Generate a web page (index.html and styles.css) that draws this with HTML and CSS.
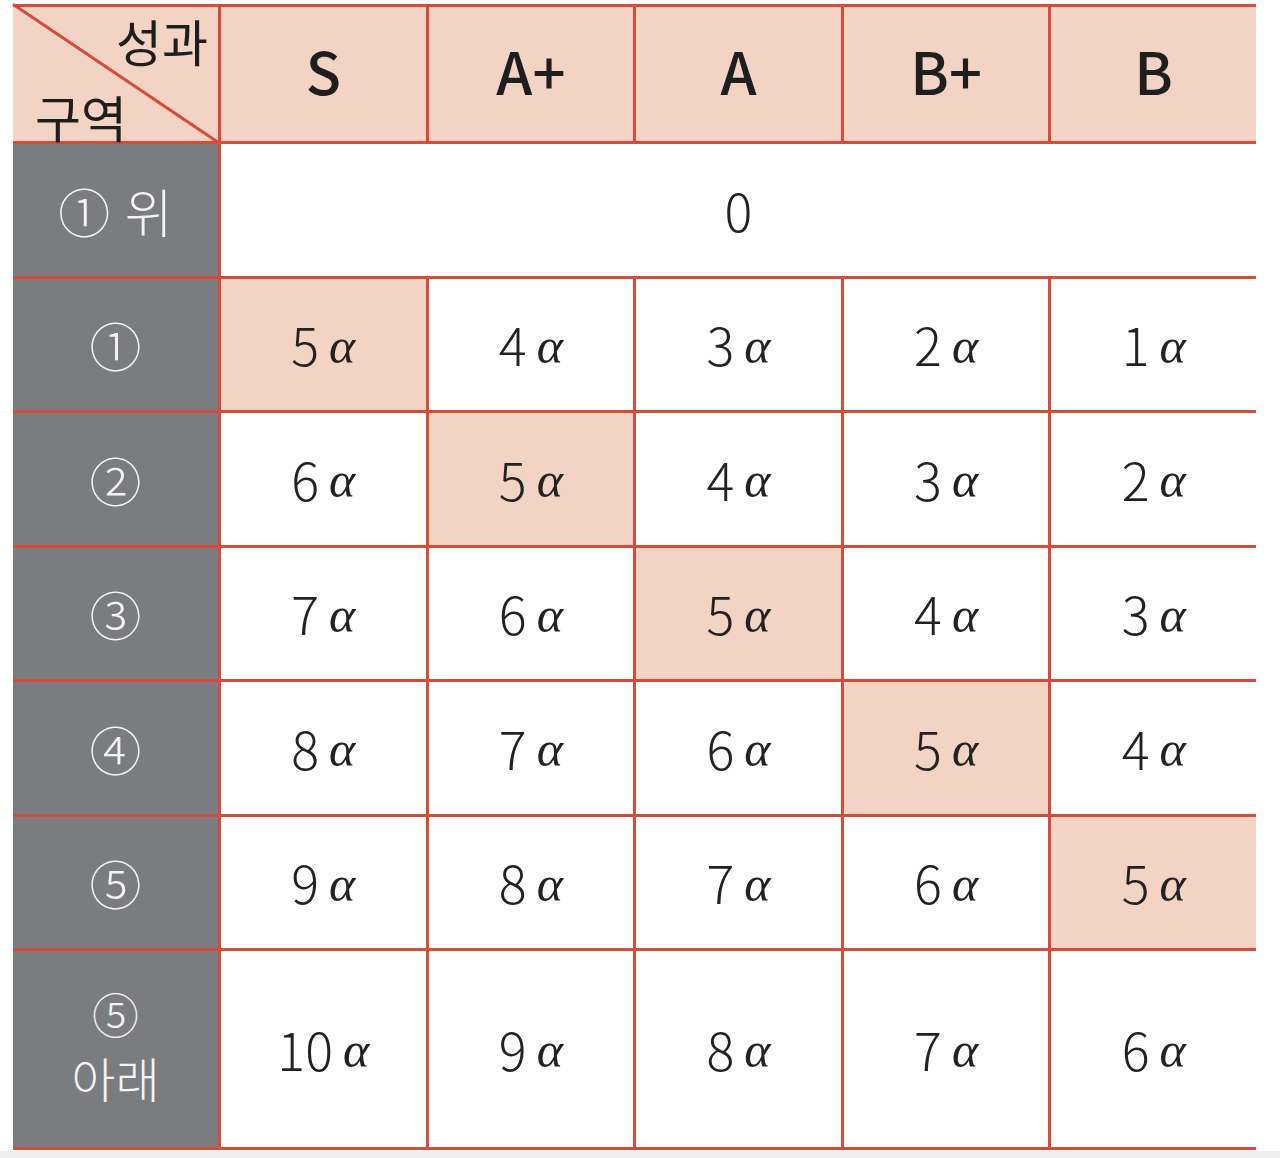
FILE: index.html
```html
<!DOCTYPE html>
<html lang="ko">
<head>
<meta charset="utf-8">
<title>성과 구역 표</title>
<link rel="stylesheet" href="styles.css">
</head>
<body>
<div class="page">
  <div class="grid">
    <div class="cell corner">
      <svg class="diag" viewBox="0 0 100 100" preserveAspectRatio="none"><line x1="0" y1="-2" x2="100" y2="101" stroke="#d64b3a" stroke-width="3" vector-effect="non-scaling-stroke"/></svg>
      <span class="c-top">성과</span>
      <span class="c-bot">구역</span>
    </div>
    <div class="cell head">S</div>
    <div class="cell head">A+</div>
    <div class="cell head">A</div>
    <div class="cell head">B+</div>
    <div class="cell head">B</div>

    <div class="cell side">① 위</div>
    <div class="cell val span5">0</div>

    <div class="cell side">①</div>
    <div class="cell val hl">5<i>α</i></div>
    <div class="cell val">4<i>α</i></div>
    <div class="cell val">3<i>α</i></div>
    <div class="cell val">2<i>α</i></div>
    <div class="cell val">1<i>α</i></div>

    <div class="cell side">②</div>
    <div class="cell val">6<i>α</i></div>
    <div class="cell val hl">5<i>α</i></div>
    <div class="cell val">4<i>α</i></div>
    <div class="cell val">3<i>α</i></div>
    <div class="cell val">2<i>α</i></div>

    <div class="cell side">③</div>
    <div class="cell val">7<i>α</i></div>
    <div class="cell val">6<i>α</i></div>
    <div class="cell val hl">5<i>α</i></div>
    <div class="cell val">4<i>α</i></div>
    <div class="cell val">3<i>α</i></div>

    <div class="cell side">④</div>
    <div class="cell val">8<i>α</i></div>
    <div class="cell val">7<i>α</i></div>
    <div class="cell val">6<i>α</i></div>
    <div class="cell val hl">5<i>α</i></div>
    <div class="cell val">4<i>α</i></div>

    <div class="cell side">⑤</div>
    <div class="cell val">9<i>α</i></div>
    <div class="cell val">8<i>α</i></div>
    <div class="cell val">7<i>α</i></div>
    <div class="cell val">6<i>α</i></div>
    <div class="cell val hl">5<i>α</i></div>

    <div class="cell side stack"><span class="st-num">⑤</span><span class="st-txt">아래</span></div>
    <div class="cell val">10<i>α</i></div>
    <div class="cell val">9<i>α</i></div>
    <div class="cell val">8<i>α</i></div>
    <div class="cell val">7<i>α</i></div>
    <div class="cell val">6<i>α</i></div>
  </div>
</div>
</body>
</html>
```

FILE: styles.css
```css
html, body {
  margin: 0;
  padding: 0;
}
body {
  background: #efefef;
  width: 1280px;
  height: 1158px;
  overflow: hidden;
  font-family: "Noto Sans CJK KR", "Noto Sans", sans-serif;
}
.page {
  background: #ffffff;
  height: 1151px;
  padding: 4px 24px 0 13px;
  box-sizing: border-box;
}
.grid {
  width: 1243px;
  display: grid;
  grid-template-columns: 205px repeat(5, 1fr);
  grid-template-rows: 134px 132px 131px 132px 131px 132px 131px 196px;
  gap: 3px;
  padding: 3px 0;
  background: #d64b3a;
}
.cell {
  display: flex;
  align-items: center;
  justify-content: center;
  background: #ffffff;
  color: #222222;
}
.corner {
  position: relative;
  background: #f2d3c4;
  display: block;
  font-size: 50px;
  font-weight: 400;
  line-height: 1;
  color: #1e1e1e;
}
.diag {
  position: absolute;
  left: 0;
  top: 0;
  width: 100%;
  height: 100%;
  overflow: visible;
}
.c-top {
  position: absolute;
  right: 10px;
  top: 8px;
}
.c-bot {
  position: absolute;
  left: 22px;
  bottom: 0;
}
.head {
  background: #f2d3c4;
  font-size: 58px;
  font-weight: 500;
  color: #1e1e1e;
  padding-bottom: 8px;
}
.side {
  background: #7b7c80;
  color: #f4f4f4;
  font-size: 52px;
  font-weight: 300;
}
.stack {
  flex-direction: column;
  line-height: 65px;
  padding-bottom: 2px;
}
.st-num {
  font-size: 47px;
  line-height: 58px;
}
.st-txt {
  font-size: 48px;
  line-height: 70px;
}
.val {
  font-size: 52px;
  font-weight: 300;
  color: #222222;
  padding-bottom: 2px;
}
.val i {
  font-family: "Liberation Serif", serif;
  font-style: italic;
  font-size: 50px;
  margin-left: 10px;
  position: relative;
  top: 2px;
}
.hl {
  background: #f2d3c4;
}
.span5 {
  grid-column: span 5;
}
```
